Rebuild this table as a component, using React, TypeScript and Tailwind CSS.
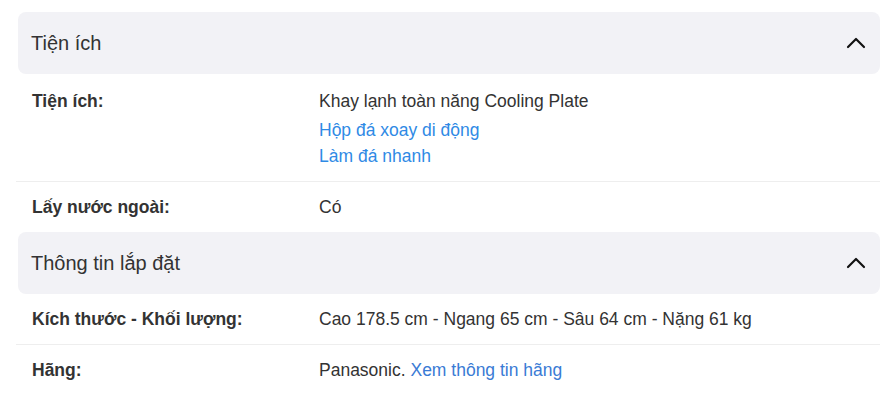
import { ChevronUp } from 'lucide-react';

type Spec = {
  label: string;
  value: React.ReactNode;
};

const sections: { title: string; rows: Spec[] }[] = [
  {
    title: 'Tiện ích',
    rows: [
      {
        label: 'Tiện ích:',
        value: (
          <>
            <div className="leading-[26px]">Khay lạnh toàn năng Cooling Plate</div>
            <div className="mt-[3px]">
              <a className="block leading-[26px] text-[#2f8ae5]">Hộp đá xoay di động</a>
              <a className="block leading-[26px] text-[#2f8ae5]">Làm đá nhanh</a>
            </div>
          </>
        )
      },
      { label: 'Lấy nước ngoài:', value: 'Có' }
    ]
  },
  {
    title: 'Thông tin lắp đặt',
    rows: [
      { label: 'Kích thước - Khối lượng:', value: 'Cao 178.5 cm - Ngang 65 cm - Sâu 64 cm - Nặng 61 kg' },
      {
        label: 'Hãng:',
        value: (
          <>
            Panasonic. <a className="text-[#3a7bd5]">Xem thông tin hãng</a>
          </>
        )
      }
    ]
  }
];

export default function App() {
  return (
    <div
      className="w-[896px] h-[405px] bg-white pl-4 pr-4 pt-3 text-[#333] overflow-hidden"
      style={{ fontFamily: '"Liberation Sans", Arial, sans-serif' }}
    >
      {sections.map((section) => (
        <div key={section.title}>
          <div className="ml-[2px] h-[62px] rounded-lg bg-[#f2f2f6] flex items-center justify-between pl-[13px] pr-2">
            <span className="text-[20px]">{section.title}</span>
            <ChevronUp className="w-8 h-8 text-[#111]" strokeWidth={1.6} />
          </div>
          {section.rows.map((row, i) => (
            <div
              key={row.label}
              className={`flex pl-4 text-[17.5px] ${i === 0 && section.title === 'Tiện ích' ? 'pt-[14px] pb-3' : 'py-3'} ${i < section.rows.length - 1 ? 'border-b border-[#eeeeee]' : ''}`}
            >
              <div className="w-[287px] shrink-0 font-bold leading-[26px]">{row.label}</div>
              <div className="leading-[26px]">{row.value}</div>
            </div>
          ))}
        </div>
      ))}
    </div>
  );
}
